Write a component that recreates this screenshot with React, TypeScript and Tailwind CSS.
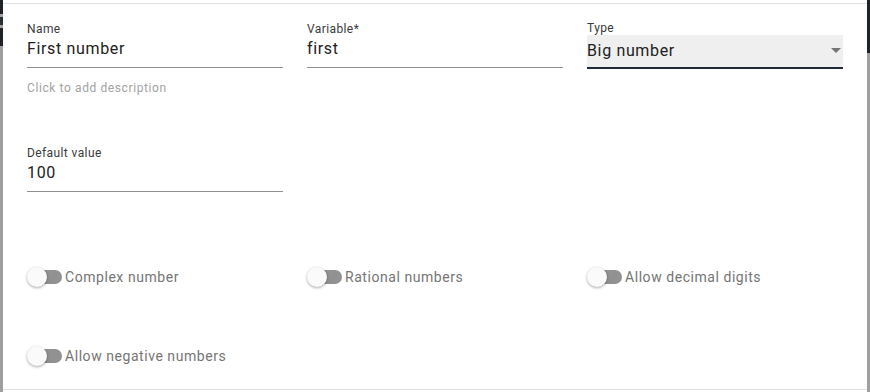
import React from 'react';

const font = { fontFamily: 'Roboto, "Noto Sans", sans-serif' };

const TextField: React.FC<{ label: string; value: string; className?: string }> = ({ label, value, className }) => (
  <div className={className}>
    <div className="text-[12px] leading-[16px] text-[#3a3a3a] tracking-[0.4px]">{label}</div>
    <div className="h-[31px] border-b border-[#8f8f8f] text-[16px] leading-[24px] text-[#212121] tracking-[0.65px]">
      {value}
    </div>
  </div>
);

const Toggle: React.FC<{ label: string }> = ({ label }) => (
  <div className="flex items-center h-[20px]">
    <div className="relative w-[35px] h-[20px] shrink-0">
      <div className="absolute left-[1px] top-[3px] w-[34px] h-[14px] rounded-full bg-[#919191]" />
      <div className="absolute left-0 top-0 w-[20px] h-[20px] rounded-full bg-[#fafafa] shadow-[0_1px_3px_rgba(0,0,0,0.35)]" />
    </div>
    <span className="ml-[3px] text-[14px] leading-[20px] text-[#757575] tracking-[0.55px]">{label}</span>
  </div>
);

export default function App() {
  return (
    <div className="w-[870px] h-[392px] flex bg-[#9e9e9e] overflow-hidden" style={font}>
      <div className="w-[3px] flex flex-col shrink-0">
        <div className="h-[14px] bg-[#1e2327]" />
        <div className="h-[14px] bg-[#a3a3a3] flex items-center">
          <div className="w-[3px] h-[8px] bg-[#2a2f33]" />
        </div>
        <div className="h-[18px] bg-[#1e2327]" />
        <div className="flex-1 bg-[#9e9e9e]" />
      </div>

      <div className="flex-1 bg-white flex flex-col">
        <div className="h-[3px]" />
        <div className="h-[1px] bg-[#e0e0e0]" />
        <div className="flex-1 pl-[24px] pr-[24px]">
          <div className="grid grid-cols-[256px_256px_256px] gap-x-[24px] pt-[17px]">
            <div>
              <TextField label="Name" value="First number" />
              <div className="mt-[12px] text-[12px] leading-[16px] text-[#a3a3a3] tracking-[0.6px]">
                Click to add description
              </div>
            </div>
            <TextField label="Variable*" value="first" />
            <div>
              <div className="pt-[1px] text-[12px] leading-[13px] text-[#3a3a3a] tracking-[0.4px]">Type</div>
              <div className="relative h-[34px] bg-[#efefef] border-b-2 border-[#1f2a36] pt-[4px] text-[16px] leading-[24px] text-[#212121] tracking-[0.65px]">
                Big number
                <svg className="absolute right-[2px] top-[13px]" width="10" height="5" viewBox="0 0 10 5">
                  <path d="M0 0 L10 0 L5 5 Z" fill="#757575" />
                </svg>
              </div>
            </div>
          </div>

          <TextField label="Default value" value="100" className="mt-[49px] w-[256px]" />

          <div className="grid grid-cols-[256px_256px_256px] gap-x-[24px] mt-[75px]">
            <Toggle label="Complex number" />
            <Toggle label="Rational numbers" />
            <Toggle label="Allow decimal digits" />
          </div>
          <div className="mt-[59px]">
            <Toggle label="Allow negative numbers" />
          </div>
        </div>
        <div className="h-[1px] bg-[#e0e0e0]" />
        <div className="h-[2px]" />
      </div>

      <div className="w-[3px] flex flex-col shrink-0">
        <div className="h-[53px] bg-[#1e2327]" />
        <div className="flex-1 bg-[#9e9e9e]" />
      </div>
    </div>
  );
}
